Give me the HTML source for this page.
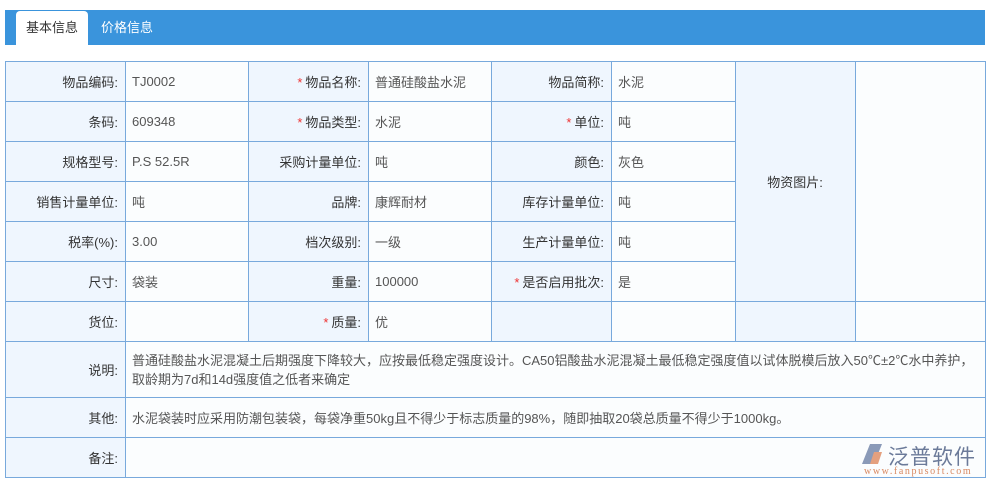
<!DOCTYPE html>
<html><head><meta charset="utf-8"><style>
body{margin:0;background:#fff;font-family:"Liberation Sans","Noto Sans CJK SC",sans-serif;font-size:13px;color:#333;width:992px;height:488px;overflow:hidden;position:relative}
.bar{position:absolute;left:5px;top:10px;width:980px;height:35px;background:#3a94dc}
.tab{position:absolute;top:1px;height:34px;line-height:34px;font-size:13px;padding:0 10px}
.t1{left:11px;width:52px;background:#fff;color:#333;border-radius:4px 4px 0 0}
.t2{left:86px;color:#fff}
table{position:absolute;left:5px;top:61px;border-collapse:collapse;table-layout:fixed;width:980px}
td{border:1px solid #78a9dc;height:39px;padding:0 6px;background:#fbfdfe;white-space:nowrap;overflow:hidden;color:#555}
td.l{background:#eff6fe;text-align:right;padding-right:7px;color:#333}
td.w{white-space:normal;line-height:19px}
.r{color:#e33;margin-right:3px}
.logo{position:absolute;left:862px;top:442px}
</style></head><body>
<div class="bar"><div class="tab t1">基本信息</div><div class="tab t2">价格信息</div></div>
<table>
<colgroup><col style="width:120px"><col style="width:123px"><col style="width:120px"><col style="width:123px"><col style="width:120px"><col style="width:124px"><col style="width:120px"><col style="width:130px"></colgroup>
<tr><td class="l">物品编码:</td><td>TJ0002</td><td class="l"><span class="r">*</span>物品名称:</td><td>普通硅酸盐水泥</td><td class="l">物品简称:</td><td>水泥</td><td class="l" rowspan="6" style="text-align:center">物资图片:</td><td rowspan="6"></td></tr>
<tr><td class="l">条码:</td><td>609348</td><td class="l"><span class="r">*</span>物品类型:</td><td>水泥</td><td class="l"><span class="r">*</span>单位:</td><td>吨</td></tr>
<tr><td class="l">规格型号:</td><td>P.S 52.5R</td><td class="l">采购计量单位:</td><td>吨</td><td class="l">颜色:</td><td>灰色</td></tr>
<tr><td class="l">销售计量单位:</td><td>吨</td><td class="l">品牌:</td><td>康辉耐材</td><td class="l">库存计量单位:</td><td>吨</td></tr>
<tr><td class="l">税率(%):</td><td>3.00</td><td class="l">档次级别:</td><td>一级</td><td class="l">生产计量单位:</td><td>吨</td></tr>
<tr><td class="l">尺寸:</td><td>袋装</td><td class="l">重量:</td><td>100000</td><td class="l"><span class="r">*</span>是否启用批次:</td><td>是</td></tr>
<tr><td class="l">货位:</td><td></td><td class="l"><span class="r">*</span>质量:</td><td>优</td><td class="l"></td><td></td><td class="l"></td><td></td></tr>
<tr><td class="l" style="height:55px">说明:</td><td colspan="7" class="w">普通硅酸盐水泥混凝土后期强度下降较大，应按最低稳定强度设计。CA50铝酸盐水泥混凝土最低稳定强度值以试体脱模后放入50℃±2℃水中养护，取龄期为7d和14d强度值之低者来确定</td></tr>
<tr><td class="l">其他:</td><td colspan="7">水泥袋装时应采用防潮包装袋，每袋净重50kg且不得少于标志质量的98%，随即抽取20袋总质量不得少于1000kg。</td></tr>
<tr><td class="l">备注:</td><td colspan="7"></td></tr>
</table>
<div class="logo">
<svg width="22" height="20" style="position:absolute;left:0;top:2px"><path d="M8 0 L20 0 L12 20 L0 20 Z" fill="#8a9ab8"/><path d="M12 8 L20 8 L16 20 L8 20Z" fill="#e4a07e"/></svg>
<div style="position:absolute;left:26px;top:-1px;font-size:21px;color:#6b7a99;letter-spacing:1px;white-space:nowrap">泛普软件</div>
<div style="position:absolute;left:2px;top:24px;font-size:10px;color:#d98860;font-family:'Liberation Serif',serif;white-space:nowrap;letter-spacing:1.6px">www.fanpusoft.com</div>
</div>
</body></html>
